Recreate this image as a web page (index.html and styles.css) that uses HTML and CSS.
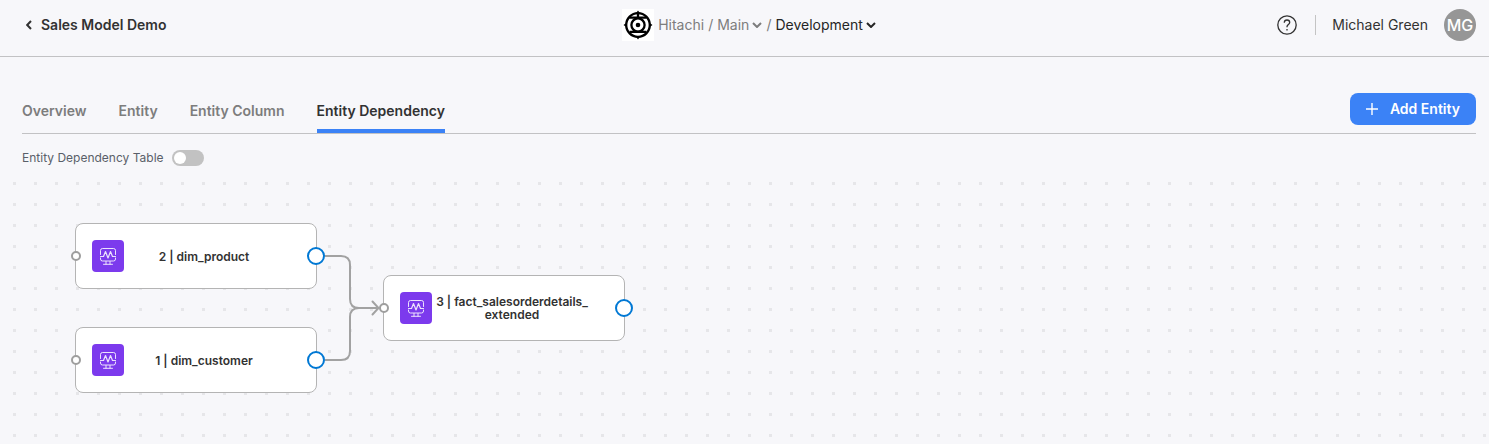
FILE: index.html
```html
<!DOCTYPE html>
<html lang="en">
<head>
  <meta charset="UTF-8" />
  <meta name="viewport" content="width=device-width, initial-scale=1" />
  <title>Sales Model Demo</title>
  <link rel="stylesheet" href="styles.css">
</head>
<body>
  <!-- Header -->
  <header class="header">
    <a class="back-link" href="#">
      <svg width="6" height="10" viewBox="0 0 6 10"><path d="M5 1 1.2 5 5 9" /></svg>
      Sales Model Demo
    </a>

    <nav class="breadcrumb" aria-label="Breadcrumb">
      <svg class="logo" width="32" height="32" viewBox="0 0 32 32">
        <rect width="32" height="32" fill="#fff" />
        <g fill="none" stroke="#000" stroke-width="2.300">
          <circle cx="16" cy="16" r="11.800" />
          <circle cx="16" cy="16" r="6.600" />
          <path d="M7.500 8.600h17M7.500 22.800h17M16 3v6" />
        </g>
        <circle cx="16" cy="16" r="2.300" />
        <path d="M16 1.500 18.500 5h-5zM16 30.500 13.500 27h5zM1.500 16 5 13.500v5zM30.500 16 27 18.500v-5z" />
      </svg>
      <a href="#">Hitachi</a>
      <span>/</span>
      <button class="crumb-button" type="button">Main
        <svg width="10" height="6" viewBox="0 0 10 6"><path d="m1 1 4 4 4-4" /></svg>
      </button>
      <span>/</span>
      <button class="crumb-button current" type="button">Development
        <svg width="10" height="6" viewBox="0 0 10 6"><path d="m1 1 4 4 4-4" /></svg>
      </button>
    </nav>

    <div class="user">
      <button class="help-button" type="button" aria-label="Help">
        <svg width="20" height="20" viewBox="0 0 20 20">
          <circle cx="10" cy="10" r="9.200" />
          <path d="M7.300 7.800c0-1.700 1.200-2.800 2.700-2.800s2.700 1 2.700 2.500c0 2-2.700 2.100-2.700 4.300v.4" />
          <path d="M10 14v1.500" />
        </svg>
      </button>
      <span class="user-name">Michael Green</span>
      <span class="avatar">MG</span>
    </div>
  </header>

  <main class="content">
    <!-- Tabs -->
    <div class="toolbar">
      <nav class="tabs">
        <a class="tab" href="#">Overview</a>
        <a class="tab" href="#">Entity</a>
        <a class="tab" href="#">Entity Column</a>
        <a class="tab active" href="#" aria-current="page">Entity Dependency</a>
      </nav>
      <button class="add-button" type="button">
        <svg width="12" height="12" viewBox="0 0 12 12"><path d="M6 0v12M0 6h12" /></svg>
        Add Entity
      </button>
    </div>

    <div class="table-switch">
      <label for="table-toggle">Entity Dependency Table</label>
      <input class="switch" id="table-toggle" type="checkbox" role="switch" />
    </div>
  </main>

  <!-- Graph -->
  <section class="canvas">
    <svg class="canvas-lines" width="100%" height="100%">
      <defs>
        <pattern id="dots" x="13" y="12" width="21" height="21" patternUnits="userSpaceOnUse">
          <rect width="3" height="3" fill="#e6e6e9" />
        </pattern>
        <symbol id="monitor" viewBox="0 0 32 32">
          <g fill="none" stroke="#fff" stroke-opacity=".85" stroke-linecap="round" stroke-linejoin="round">
            <path d="M8.500 14.500v-4a2 2 0 0 1 2-2h11a2 2 0 0 1 2 2v4M8.500 18v1a2 2 0 0 0 2 2h11a2 2 0 0 0 2-2v-1" />
            <path stroke-width="1.200" d="M8.500 16.500h3l2-5 2.500 6.500 2.500-6.500 2 5h3" />
            <path d="M14 21.500v2.500M18 21.500v2.500M11.500 24.300h9" />
          </g>
        </symbol>
      </defs>
      <rect width="100%" height="100%" fill="url(#dots)" />
      <g fill="none" stroke="#a2a2a2" stroke-width="2">
        <path d="M325 86h16q9 0 9 9v34q0 9 9 9h20" />
        <path d="M325 190h16q9 0 9-9v-34q0-9 9-9h20" />
        <path d="m372.500 131.500 6 6.500-6 6.500" stroke-linecap="round" />
      </g>
    </svg>

    <div class="node node-product">
      <span class="handle handle-in"></span>
      <svg class="node-icon"><use href="#monitor" /></svg>
      <div class="node-label">2 | dim_product</div>
      <span class="handle handle-out"></span>
    </div>
    <div class="node node-customer">
      <span class="handle handle-in"></span>
      <svg class="node-icon"><use href="#monitor" /></svg>
      <div class="node-label">1 | dim_customer</div>
      <span class="handle handle-out"></span>
    </div>
    <div class="node node-sales">
      <span class="handle handle-in"></span>
      <svg class="node-icon"><use href="#monitor" /></svg>
      <div class="node-label">3 | fact_salesorderdetails_<wbr>extended</div>
      <span class="handle handle-out"></span>
    </div>
  </section>
</body>
</html>
```
FILE: styles.css
```css
* {
  box-sizing: border-box;
}

body {
  margin: 0;
  min-height: 100vh;
  display: flex;
  flex-direction: column;
  font-family: Inter, "Liberation Sans", sans-serif;
  font-size: 14px;
  line-height: 20px;
  color: #323232;
  background-color: #f7f7fa;
}

a {
  color: inherit;
  text-decoration: none;
}

button {
  padding: 0;
  border: 0;
  background: none;
  font: inherit;
  color: inherit;
  cursor: pointer;
}

/* Header */
.header {
  display: grid;
  grid-template-columns: 1fr auto 1fr;
  align-items: center;
  padding: 9px 13px 15px 22px;
  border-bottom: 1px solid #c2c2c4;
}

.back-link {
  display: flex;
  align-items: center;
  gap: 9px;
  padding-left: 4px;
  font-weight: 600;
}

.back-link svg,
.crumb-button svg {
  fill: none;
  stroke: currentColor;
  stroke-width: 2;
}

.breadcrumb {
  display: flex;
  align-items: center;
  gap: 4px;
  color: #7d7d7d;
}

.crumb-button {
  display: flex;
  align-items: center;
  gap: 3px;
}

.crumb-button.current {
  color: #252525;
}

.user {
  display: flex;
  align-items: center;
  justify-content: flex-end;
  gap: 16px;
}

.help-button {
  display: flex;
  padding-right: 2px;
}

.help-button svg {
  fill: none;
  stroke: #323232;
  stroke-width: 1.3;
}

.user-name {
  padding-left: 16px;
  border-left: 1px solid #c4c4c4;
}

.avatar {
  width: 32px;
  height: 32px;
  border-radius: 50%;
  background-color: #969696;
  color: #fff;
  font-size: 16px;
  font-weight: 500;
  line-height: 32px;
  text-align: center;
}

/* Tabs */
.content {
  padding: 36px 13px 0 22px;
}

.toolbar {
  display: flex;
  justify-content: space-between;
  align-items: flex-start;
  border-bottom: 1px solid #c2c2c4;
}

.tabs {
  display: flex;
  gap: 32px;
}

.tab {
  padding: 8px 0;
  border-bottom: 4px solid transparent;
  font-weight: 600;
  color: #7d7d7d;
}

.tab.active {
  border-color: #3b82f6;
  color: #323232;
}

.add-button {
  display: flex;
  align-items: center;
  gap: 12px;
  height: 32px;
  padding: 0 16px;
  border-radius: 8px;
  background-color: #3b82f6;
  color: #fff;
  font-weight: 600;
}

.add-button svg {
  stroke: #fff;
  stroke-width: 1.4;
}

.table-switch {
  display: flex;
  align-items: center;
  gap: 8px;
  padding: 16px 0 4px;
  font-size: 12px;
  line-height: 16px;
  color: #5a5f69;
}

.switch {
  appearance: none;
  width: 32px;
  height: 16px;
  margin: 0;
  padding: 2px;
  border-radius: 8px;
  background-color: #c2c2c2;
  cursor: pointer;
}

.switch::before {
  content: "";
  display: block;
  width: 12px;
  height: 12px;
  border-radius: 50%;
  background-color: #fff;
}

.switch:checked {
  background-color: #3b82f6;
}

.switch:checked::before {
  margin-left: auto;
}

/* Graph */
.canvas {
  position: relative;
  flex: 1;
  min-height: 240px;
  overflow: hidden;
}

.canvas-lines {
  position: absolute;
  inset: 0;
}

.node {
  position: absolute;
  display: flex;
  align-items: center;
  width: 242px;
  height: 66px;
  padding: 0 32px 0 16px;
  border: 1px solid #b4b4b4;
  border-radius: 8px;
  background-color: #fff;
}

.node-product {
  left: 75px;
  top: 53px;
}

.node-customer {
  left: 75px;
  top: 157px;
}

.node-sales {
  left: 383px;
  top: 105px;
}

.node-icon {
  flex: none;
  width: 32px;
  height: 32px;
  border-radius: 4px;
  background-color: #7c3aed;
}

.node-label {
  flex: 1;
  font-size: 12px;
  font-weight: 600;
  line-height: 13px;
  text-align: center;
}

.handle {
  position: absolute;
  top: 50%;
  border-radius: 50%;
  background-color: #fff;
  transform: translateY(-50%);
}

.handle-in {
  left: -5px;
  width: 10px;
  height: 10px;
  border: 2px solid #9e9e9e;
}

.handle-out {
  right: -9px;
  width: 18px;
  height: 18px;
  border: 2px solid #0078d4;
}
```
